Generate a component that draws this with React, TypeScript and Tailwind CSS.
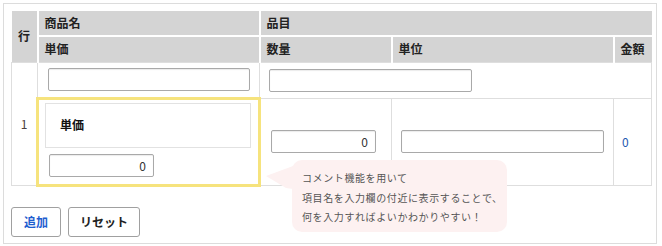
import React from 'react';

const inputCls =
  'h-[23px] rounded-[2px] border border-[#a9a9a9] bg-white px-[7px] text-[12px] text-[#333] outline-none shadow-[inset_0_1px_1px_rgba(0,0,0,0.08)]';

export default function App() {
  return (
    <div className="p-[3px] font-['Noto_Sans_CJK_JP','Noto_Sans',sans-serif] bg-white">
      <div className="relative w-[654px] h-[241px] border border-[#dcdcdc] px-[7px] pt-[7px]">
        <table className="table-fixed border-collapse w-[640px] text-[12px]">
          <colgroup>
            <col className="w-[26px]" />
            <col className="w-[222px]" />
            <col className="w-[132px]" />
            <col className="w-[222px]" />
            <col className="w-[38px]" />
          </colgroup>
          <thead>
            <tr className="h-[25px]">
              <th
                rowSpan={2}
                className="bg-[#d4d4d4] border-r-2 border-white text-center font-bold text-[#222]"
              >
                行
              </th>
              <th className="bg-[#d4d4d4] border-r-2 border-b-2 border-white text-left pl-[6px] font-bold text-[#222]">
                商品名
              </th>
              <th colSpan={3} className="bg-[#d4d4d4] border-b-2 border-white text-left pl-[6px] font-bold text-[#222]">
                品目
              </th>
            </tr>
            <tr className="h-[26px]">
              <th className="bg-[#d4d4d4] border-r-2 border-white text-left pl-[6px] font-bold text-[#222]">単価</th>
              <th className="bg-[#d4d4d4] border-r-2 border-white text-left pl-[6px] font-bold text-[#222]">数量</th>
              <th className="bg-[#d4d4d4] border-r-2 border-white text-left pl-[6px] font-bold text-[#222]">単位</th>
              <th className="bg-[#d4d4d4] text-left pl-[6px] font-bold text-[#222]">金額</th>
            </tr>
          </thead>
          <tbody>
            <tr className="h-[36px]">
              <td rowSpan={2} className="border border-[#dedede] text-center text-[#4a4040] align-middle">
                1
              </td>
              <td className="border border-[#dedede] px-[10px] align-middle">
                <input className={inputCls + ' w-[202px] block'} defaultValue="" />
              </td>
              <td colSpan={3} className="border border-[#dedede] pl-[9px] pr-[10px] align-middle">
                <input className={inputCls + ' w-[203px] block'} defaultValue="" />
              </td>
            </tr>
            <tr className="h-[87px]">
              <td className="border-[3px] border-[#f6e37d] p-0 align-top">
                <div className="pl-[6px] pr-[7px] pt-[3px] pb-[3px]">
                  <div className="h-[45px] border border-[#e2e2e2] flex items-center pl-[14px] font-bold text-[#111]">
                    単価
                  </div>
                  <input
                    className={inputCls + ' w-[105px] block mt-[6px] ml-[4px] text-right'}
                    defaultValue="0"
                  />
                </div>
              </td>
              <td className="border border-[#dedede] pl-[10px] pr-[14px] align-middle">
                <input className={inputCls + ' w-[105px] block text-right'} defaultValue="0" />
              </td>
              <td className="border border-[#dedede] px-[9px] align-middle">
                <input className={inputCls + ' w-[203px] block'} defaultValue="" />
              </td>
              <td className="border border-[#dedede] pl-[8px] align-middle text-[#1d58b0]">0</td>
            </tr>
          </tbody>
        </table>

        <div className="flex gap-[7px] mt-[20px]">
          <button className="h-[30px] w-[50px] rounded-[3px] border border-[#a0a0a0] bg-white text-[12px] font-bold text-[#1f5ecf]">
            追加
          </button>
          <button className="h-[30px] w-[72px] rounded-[3px] border border-[#a0a0a0] bg-white text-[12px] font-bold text-[#222]">
            リセット
          </button>
        </div>

        {/* comment bubble */}
        <div className="absolute left-[262px] top-[156px] flex items-start">
          <svg width="27" height="30" viewBox="0 0 27 30" className="mt-[1px] -mr-px">
            <polygon points="0,15 27,5 27,28 20,27" fill="#fdf1f1" />
          </svg>
          <div className="w-[215px] h-[72px] rounded-[10px] bg-[#fdf1f1] pl-[10px] pt-[8px] text-[10px] leading-[19.5px] tracking-[0.6px] text-[#555]">
            <div>コメント機能を用いて</div>
            <div>項目名を入力欄の付近に表示することで、</div>
            <div>何を入力すればよいかわかりやすい！</div>
          </div>
        </div>
      </div>
    </div>
  );
}
